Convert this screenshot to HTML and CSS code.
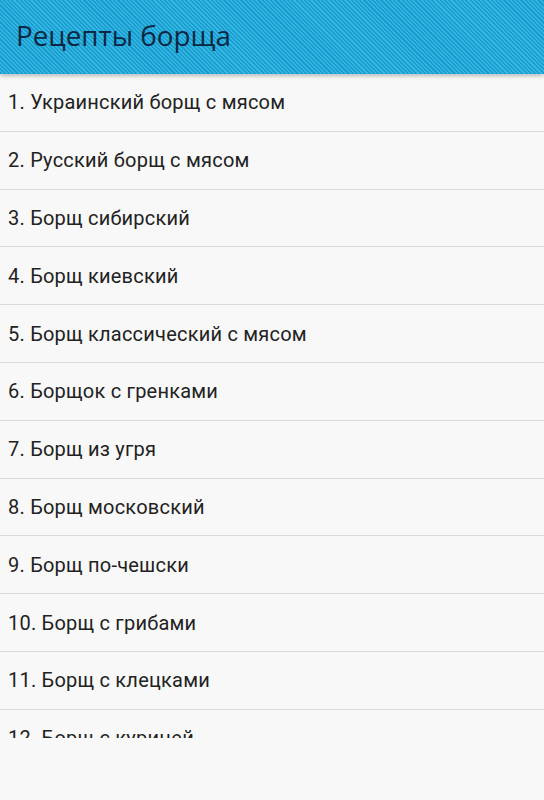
FILE: index.html
```html
<!DOCTYPE html>
<html lang="ru">
<head>
<meta charset="utf-8">
<link rel="stylesheet" href="styles.css">
</head>
<body>
<div class="app">
  <header class="bar"><h1 class="title">Рецепты борща</h1></header>
  <ul class="list">
    <li class="item">1. Украинский борщ с мясом</li>
    <li class="item">2. Русский борщ с мясом</li>
    <li class="item">3. Борщ сибирский</li>
    <li class="item">4. Борщ киевский</li>
    <li class="item">5. Борщ классический с мясом</li>
    <li class="item">6. Борщок с гренками</li>
    <li class="item">7. Борщ из угря</li>
    <li class="item">8. Борщ московский</li>
    <li class="item">9. Борщ по-чешски</li>
    <li class="item">10. Борщ с грибами</li>
    <li class="item">11. Борщ с клецками</li>
    <li class="item">12. Борщ с курицей</li>
  </ul>
</div>
</body>
</html>
```

FILE: styles.css
```css
html, body {
  margin: 0;
  padding: 0;
  background: #f8f8f8;
}
.app {
  width: 544px;
  height: 800px;
  display: flex;
  flex-direction: column;
  background: #f8f8f8;
}
.bar {
  position: relative;
  z-index: 1;
  height: 74px;
  box-sizing: border-box;
  padding-bottom: 4px;
  flex: none;
  display: flex;
  align-items: center;
  padding-left: 16px;
  background-color: #22a6d6;
  background-image: repeating-linear-gradient(45deg, #1a9cce 0px, #1a9cce 1.5px, #33b6e2 1.5px, #33b6e2 3px);
  box-shadow: 0 2px 4px rgba(0,0,0,0.25);
}
.title {
  margin: 0;
  font-family: "Open Sans", "Noto Sans", sans-serif;
  font-weight: 400;
  font-size: 27.8px;
  color: #0a2844;
}
.list {
  list-style: none;
  margin: 0;
  padding: 0;
  height: 664px;
  overflow: hidden;
  flex: none;
}
.item {
  box-sizing: border-box;
  height: 57.8px;
  border-bottom: 1px solid #dcdcdc;
  display: flex;
  align-items: center;
  padding-left: 8px;
  font-family: Roboto, "Liberation Sans", sans-serif;
  font-size: 20px;
  letter-spacing: 0.22px;
  color: #222;
}
```
